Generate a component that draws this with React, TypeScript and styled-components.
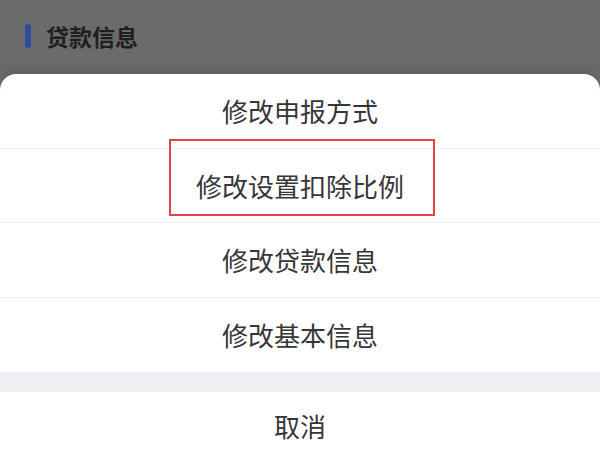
import React from "react";
import styled, { createGlobalStyle } from "styled-components";

const GlobalStyle = createGlobalStyle`
  html, body {
    margin: 0;
    padding: 0;
    height: 100%;
    overflow: hidden;
  }
  body {
    font-family: "Noto Sans CJK SC", "Noto Sans", sans-serif;
  }
  * { box-sizing: border-box; }
`;

const Screen = styled.div`
  height: 100vh;
  display: flex;
  flex-direction: column;
  background: #6b6b6b;
`;

const SectionHeader = styled.div`
  height: 74px;
  flex-shrink: 0;
  display: flex;
  align-items: center;
  gap: 15px;
  padding: 0 0 2px 25px;
`;

const Accent = styled.span`
  width: 6px;
  height: 24px;
  border-radius: 3px;
  background: #2c4d9e;
`;

const SectionTitle = styled.span`
  font-size: 23px;
  font-weight: 700;
  color: #1f1f1f;
  line-height: 1;
`;

const Sheet = styled.div`
  position: relative;
  flex: 1;
  display: flex;
  flex-direction: column;
  background: #ffffff;
  border-radius: 16px 16px 0 0;
  box-shadow: 0 -4px 10px rgba(0, 0, 0, 0.12);
  overflow: hidden;
`;

const Option = styled.div<{ $last?: boolean }>`
  height: 74.5px;
  flex-shrink: 0;
  display: flex;
  align-items: center;
  justify-content: center;
  font-size: 26px;
  color: #363636;
  border-bottom: ${(p) => (p.$last ? "none" : "1px solid #efefef")};
`;

const Gap = styled.div`
  height: 20px;
  flex-shrink: 0;
  background: #efeff3;
`;

const Cancel = styled.div`
  height: 66px;
  flex-shrink: 0;
  display: flex;
  align-items: center;
  justify-content: center;
  font-size: 26px;
  color: #363636;
`;

const Highlight = styled.div`
  position: absolute;
  top: 65px;
  left: 169px;
  width: 266px;
  height: 77px;
  border: 2px solid #e2453f;
  pointer-events: none;
`;

const options = ["修改申报方式", "修改设置扣除比例", "修改贷款信息", "修改基本信息"];

export default function App() {
  return (
    <>
      <GlobalStyle />
      <Screen>
        <SectionHeader>
          <Accent />
          <SectionTitle>贷款信息</SectionTitle>
        </SectionHeader>
        <Sheet>
          {options.map((o, i) => (
            <Option key={o} $last={i === options.length - 1}>
              {o}
            </Option>
          ))}
          <Gap />
          <Cancel>取消</Cancel>
          <Highlight />
        </Sheet>
      </Screen>
    </>
  );
}
